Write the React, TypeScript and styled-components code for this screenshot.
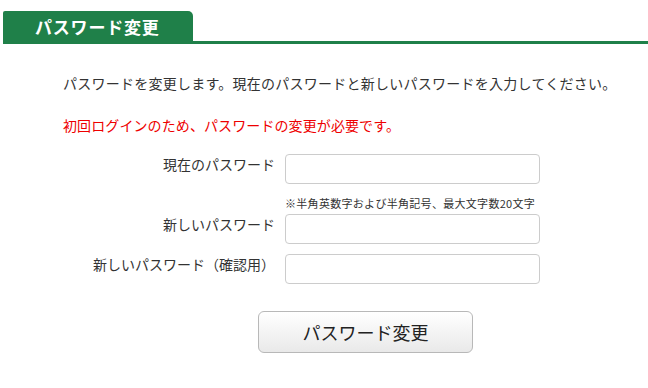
import React from 'react'
import {styled, createGlobalStyle} from 'styled-components'

const GlobalStyle = createGlobalStyle`
    body {
        margin: 0;
        background: #ffffff;
        font-family: "Noto Sans CJK JP", "Noto Sans", sans-serif;
        color: #333333;
    }
`

const App: React.FC = () => {
    return (
        <>
            <GlobalStyle />
            <Page>
                <Header>
                    <Tab>パスワード変更</Tab>
                </Header>

                <Content>
                    <Intro>パスワードを変更します。現在のパスワードと新しいパスワードを入力してください。</Intro>
                    <Notice>初回ログインのため、パスワードの変更が必要です。</Notice>

                    <Form onSubmit={(e) => e.preventDefault()}>
                        <Label htmlFor="current">現在のパスワード</Label>
                        <Input id="current" type="password" />

                        <Spacer />
                        <Hint>※半角英数字および半角記号、最大文字数20文字</Hint>

                        <Label htmlFor="new">新しいパスワード</Label>
                        <Input id="new" type="password" />

                        <Label htmlFor="confirm" $top={10}>新しいパスワード（確認用）</Label>
                        <Input id="confirm" type="password" $top={10} />

                        <Actions>
                            <SubmitButton type="submit">パスワード変更</SubmitButton>
                        </Actions>
                    </Form>
                </Content>
            </Page>
        </>
    )
}

export default App

const Page = styled.div`
    width: 648px;
    padding-top: 11px;
`

const Header = styled.div`
    display: flex;
    margin-left: 3px;
    border-bottom: 3px solid #1f8049;
`

const Tab = styled.h1`
    margin: 0;
    width: 158px;
    height: 30px;
    padding-left: 32px;
    background: #1f8049;
    border-radius: 2px 5px 0 0;
    color: #ffffff;
    font-size: 17px;
    font-weight: bold;
    line-height: 31px;
    letter-spacing: 0.8px;
`

const Content = styled.div`
    padding: 29px 0 0 63px;
`

const Intro = styled.p`
    margin: 0;
    font-size: 14px;
    line-height: 20px;
    color: #333333;
    letter-spacing: 0.25px;
`

const Notice = styled.p`
    margin: 22px 0 0;
    font-size: 14px;
    line-height: 20px;
    color: #ee0000;
    letter-spacing: 0.1px;
`

const Form = styled.form`
    display: grid;
    grid-template-columns: 212px 255px;
    column-gap: 10px;
    margin-top: 19px;
`

const Label = styled.label<{$top?: number}>`
    margin-top: ${p => p.$top ?? 0}px;
    text-align: right;
    font-size: 14px;
    line-height: 20px;
    color: #333333;
    white-space: nowrap;
`

const Input = styled.input<{$top?: number}>`
    box-sizing: border-box;
    width: 255px;
    height: 30px;
    margin: ${p => p.$top ?? 0}px 0 0;
    padding: 0 8px;
    border: 1px solid #cccccc;
    border-radius: 4px;
    background: #ffffff;
    font-size: 14px;
    outline: none;
`

const Spacer = styled.div``

const Hint = styled.div`
    margin: 11px 0 3px;
    font-size: 11px;
    line-height: 16px;
    color: #333333;
    letter-spacing: 0.3px;
    white-space: nowrap;
`

const Actions = styled.div`
    grid-column: 1 / 3;
    padding: 27px 0 0 195px;
`

const SubmitButton = styled.button`
    width: 215px;
    height: 42px;
    border: 1px solid #b8b8b8;
    border-radius: 6px;
    background: linear-gradient(#ffffff, #e9e9e9);
    font-family: "Noto Sans CJK JP", "Noto Sans", sans-serif;
    font-size: 18px;
    color: #222222;
    cursor: pointer;
`
